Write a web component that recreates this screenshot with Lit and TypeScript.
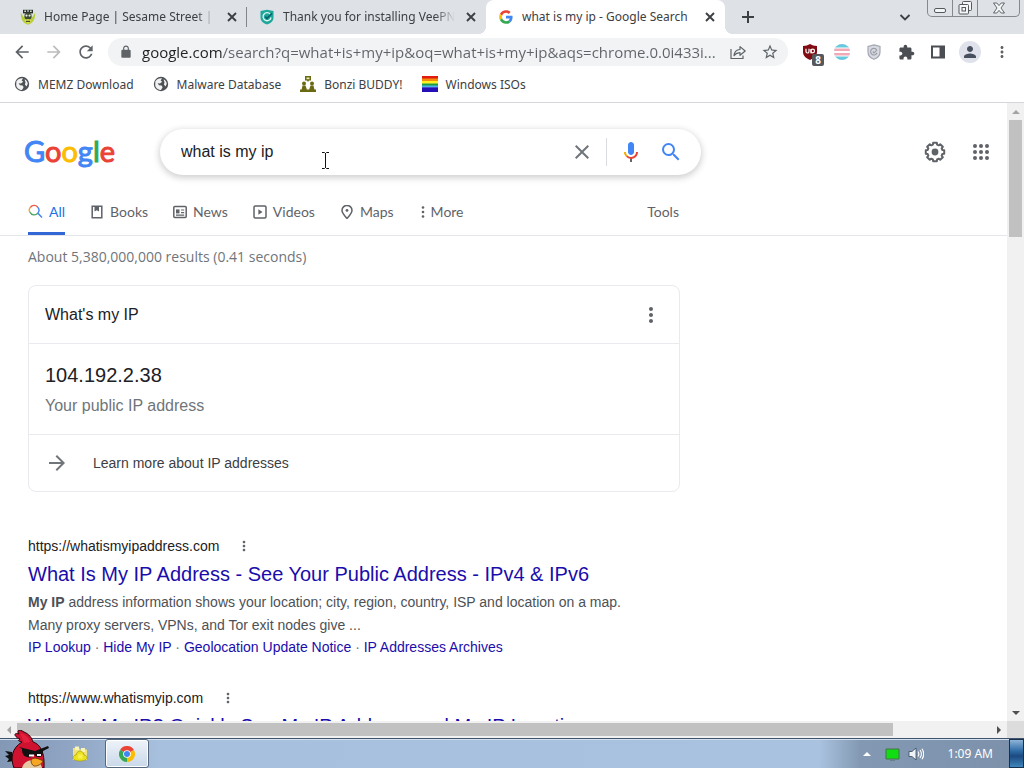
import { LitElement, html, css, svg, TemplateResult } from "lit";
import { customElement, property } from "lit/decorators.js";

/* ---------- icons ---------- */

const icon = (size: number, box: string, body: TemplateResult) =>
  html`<svg width=${size} height=${size} viewBox=${box} aria-hidden="true" style="display:block;flex:none">${body}</svg>`;

const mat = (size: number, d: string, fill = "#5f6368") =>
  icon(size, "0 0 24 24", svg`<path d=${d} fill=${fill}></path>`);

const D = {
  back: "M20 11H7.83l5.59-5.59L12 4l-8 8 8 8 1.41-1.41L7.83 13H20v-2z",
  forward: "M12 4l-1.41 1.41L16.17 11H4v2h12.17l-5.58 5.59L12 20l8-8z",
  reload: "M17.65 6.35C16.2 4.9 14.21 4 12 4c-4.42 0-7.99 3.58-7.99 8s3.57 8 7.99 8c3.73 0 6.84-2.55 7.73-6h-2.08c-.82 2.33-3.04 4-5.65 4-3.31 0-6-2.69-6-6s2.69-6 6-6c1.66 0 3.14.69 4.22 1.78L13 11h7V4l-2.35 2.35z",
  lock: "M18 8h-1V6c0-2.76-2.24-5-5-5S7 3.240 7 6v2H6c-1.100 0-2 .9-2 2v10c0 1.100.9 2 2 2h12c1.100 0 2-.9 2-2V10c0-1.100-.9-2-2-2zM9 8V6c0-1.660 1.340-3 3-3s3 1.340 3 3v2H9z",
  star: "M22 9.24l-7.190-.62L12 2 9.190 8.630 2 9.240l5.460 4.730L5.820 21 12 17.270 18.180 21l-1.630-7.030L22 9.240zM12 15.400l-3.760 2.270 1-4.280-3.320-2.880 4.380-.38L12 6.100l1.710 4.040 4.380.38-3.320 2.880 1 4.280L12 15.400z",
  dots: "M12 8c1.100 0 2-.9 2-2s-.9-2-2-2-2 .9-2 2 .9 2 2 2zm0 2c-1.100 0-2 .9-2 2s.9 2 2 2 2-.9 2-2-.9-2-2-2zm0 6c-1.100 0-2 .9-2 2s.9 2 2 2 2-.9 2-2-.9-2-2-2z",
  puzzle: "M20.500 11H19V7c0-1.100-.9-2-2-2h-4V3.500C13 2.120 11.880 1 10.500 1S8 2.120 8 3.500V5H4c-1.100 0-2 .9-2 2v3.800h1.500c1.490 0 2.700 1.210 2.700 2.700s-1.210 2.700-2.700 2.700H2V20c0 1.100.9 2 2 2h3.800v-1.500c0-1.490 1.210-2.700 2.700-2.700s2.700 1.210 2.700 2.700V22H17c1.100 0 2-.9 2-2v-4h1.500c1.380 0 2.500-1.120 2.500-2.500S21.880 11 20.500 11z",
  person: "M12 12c2.210 0 4-1.790 4-4s-1.790-4-4-4-4 1.790-4 4 1.790 4 4 4zm0 2c-2.670 0-8 1.340-8 4v2h16v-2c0-2.660-5.330-4-8-4z",
  close: "M19 6.410L17.590 5 12 10.590 6.410 5 5 6.410 10.590 12 5 17.590 6.410 19 12 13.410 17.590 19 19 17.590 13.410 12z",
  search: "M15.500 14h-.79l-.28-.27A6.470 6.470 0 0 0 16 9.500 6.500 6.500 0 1 0 9.500 16c1.610 0 3.090-.59 4.230-1.570l.27.28v.79l5 4.990L20.490 19l-4.990-5zm-6 0C7.010 14 5 11.990 5 9.500S7.010 5 9.500 5 14 7.010 14 9.500 11.990 14 9.500 14z",
};

/* Gear outline generated from its tooth geometry, eight rounded teeth around a solid hub. */
const gearPath = (() => {
  const pts: string[] = [];
  for (let i = 0; i < 8; i++) {
    const base = (i * Math.PI) / 4 - Math.PI / 2;
    for (const [off, r] of [[-0.28, 7.6], [-0.2, 9.4], [0.2, 9.4], [0.28, 7.6]]) {
      pts.push(`${(12 + r * Math.cos(base + off)).toFixed(2)} ${(12 + r * Math.sin(base + off)).toFixed(2)}`);
    }
  }
  return `M${pts.join("L")}z`;
})();
const gear = icon(24, "0 0 24 24", svg`
  <path d=${gearPath} fill="none" stroke="#5f6368" stroke-width="2" stroke-linejoin="round"></path>
  <circle cx="12" cy="12" r="3.400" fill="#5f6368"></circle>`);

const globe = icon(16, "0 0 16 16", svg`
  <circle cx="8" cy="8" r="7.200" fill="#4d5156"></circle>
  <path d="M2.400 5.200C4 3 6.500 2 9 2.400L7.600 4.600 9.200 5.800 7 7.400 4.600 7.200 6 9.200l2.600.2 1 1.800L8 14C4.800 14 2.400 11.600 2.200 9z" fill="#fff" opacity=".92"></path>
  <path d="M10.500 3.200c1.800.8 3.200 2.600 3.300 4.600l-1.300 2.600-1.600-1.800.600-2.200z" fill="#fff" opacity=".92"></path>`);

const cookieFace = icon(16, "0 0 16 16", svg`
  <path d="M.8 3.500C.5 9 2.500 14.500 8 15.700 13.500 14.500 15.500 9 15.200 3.500L12.500 8h-9z" fill="#b4cf3a"></path>
  <path d="M3 .8h10v3.600H3z" fill="#27302a"></path>
  <path d="M4.300 1.500h1.700v1.500H4.300zM7.200 1.300h1.600v1.500H7.200zM10 1.500h1.700v1.500H10z" fill="#d8dccf"></path>
  <circle cx="8" cy="7.200" r="3.600" fill="#3b4a30"></circle>
  <circle cx="6.500" cy="6.600" r="1.100" fill="#e9edda"></circle><circle cx="9.600" cy="6.600" r="1.100" fill="#e9edda"></circle>
  <path d="M4.500 11.300 8 10l3.500 1.300L8 15z" fill="#e2dd54"></path><path d="M6 11.800h4V13H6z" fill="#3b4a30"></path>`);

const veepn = icon(16, "0 0 16 16", svg`
  <path d="M1.500 2 8 .8 14.500 2v6.500c0 3.500-3 6-6.500 7-3.500-1-6.500-3.500-6.500-7z" fill="#1fa79a"></path>
  <path d="M11.200 5.200A4 4 0 1 0 12 8.500" stroke="#dff6f1" stroke-width="1.300" fill="none"></path>
  <path d="M6.200 7.600 8 9.400l5-5" stroke="#0b6470" stroke-width="1.600" fill="none"></path>`);

const gMark = icon(16, "-4 -4 56 56", svg`
  <path fill="#EA4335" d="M24 9.500c3.540 0 6.710 1.220 9.210 3.600l6.850-6.850C35.900 2.380 30.470 0 24 0 14.620 0 6.510 5.380 2.560 13.220l7.980 6.190C12.430 13.720 17.740 9.500 24 9.500z"></path>
  <path fill="#4285F4" d="M46.980 24.550c0-1.570-.15-3.090-.38-4.550H24v9.020h12.940c-.58 2.960-2.260 5.480-4.780 7.180l7.730 6c4.510-4.180 7.090-10.360 7.090-17.650z"></path>
  <path fill="#FBBC05" d="M10.530 28.590c-.48-1.450-.76-2.990-.76-4.590s.27-3.140.76-4.590l-7.980-6.190C.92 16.460 0 20.120 0 24c0 3.880.92 7.540 2.560 10.780l7.970-6.190z"></path>
  <path fill="#34A853" d="M24 48c6.480 0 11.930-2.130 15.890-5.810l-7.730-6c-2.150 1.450-4.920 2.300-8.160 2.300-6.260 0-11.570-4.220-13.470-9.910l-7.980 6.190C6.510 42.620 14.620 48 24 48z"></path>`);

const bonzi = icon(16, "0 0 16 16", svg`
  <g fill="#6b6a12"><path d="M5 0h6v4.600H9L8 6 7 4.600H5z"></path>
  <circle cx="4" cy="7.400" r="2"></circle><circle cx="12" cy="7.400" r="2"></circle>
  <path d="M1.500 14 2.500 9.500h3L7 14zM9 14l1.500-4.500h3l1 4.500zM0 13.500h16V16H0z"></path></g>
  <path d="M6.500 1.500h3v1.700h-3z" fill="#e8f0c0"></path>`);

const rainbow = icon(16, "0 0 16 16", svg`
  <path fill="#e01b10" d="M0 0h16v3H0z"></path><path fill="#f58a0c" d="M0 2.500h16v2.800H0z"></path>
  <path fill="#fdf01d" d="M0 5h16v2.800H0z"></path><path fill="#1f9a3c" d="M0 7.500h16v2.500H0z"></path>
  <path fill="#49b4ee" d="M0 9.500h16v2H0z"></path><path fill="#2510b8" d="M0 11.300h16V16H0z"></path>`);

const share = icon(16, "0 0 16 16", svg`
  <path d="M1 5V14.500H13V11.500" fill="none" stroke="#5f6368" stroke-width="1.200"></path>
  <path d="M4 11.500c.4-3.600 2.500-5.800 6-6V2.600L15.200 7 10 11.300V8.700C7.500 8.700 5.600 9.600 4 11.500z" fill="none" stroke="#5f6368" stroke-width="1.200" stroke-linejoin="round"></path>`);

const ublock = html`<span class="ub">${icon(16, "0 0 16 16", svg`
  <path d="M8 0c2 1.300 4.200 2 7 2v6c0 3.800-3 6.300-7 8-4-1.700-7-4.200-7-8V2c2.800 0 5-.7 7-2z" fill="#800b12"></path>
  <path d="M4 4.800v2.700a1.500 1.500 0 0 0 3 0V4.800M9 9.500V5" stroke="#fff" stroke-width="1.200" fill="none"></path>
  <circle cx="10.700" cy="7" r="1.800" stroke="#fff" stroke-width="1.200" fill="none"></circle>`)}<b class="ub-n">8</b></span>`;

const transFlag = icon(16, "0 0 16 16", svg`
  <clipPath id="disc"><circle cx="8" cy="8" r="8"></circle></clipPath>
  <g clip-path="url(#disc)"><path fill="#68c8dc" d="M0 0h16v16H0z"></path><path fill="#fff" d="M0 3.500h16v9H0z"></path><path fill="#f3a9b5" d="M0 4.500h16v2.500H0zM0 9h16v2.500H0z"></path></g>`);

const grayShield = icon(16, "0 0 16 16", svg`
  <path d="M8 .8 14 2.500v5.500c0 3.500-2.500 6-6 7.300C4.500 14 2 11.500 2 8V2.500z" fill="#d8dae0" stroke="#a3a7b3" stroke-width="1.200"></path>
  <path d="M10.600 5.800a3.300 3.300 0 1 0 .4 3M6.800 7.500 8 8.800l3-3" stroke="#9a9eab" stroke-width="1.200" fill="none"></path>`);

const sidePanel = icon(16, "0 0 16 16", svg`
  <path d="M2 2.500h12v11H2z" fill="none" stroke="#4b4f54" stroke-width="2"></path><path d="M9.500 2.500H14v11H9.500z" fill="#4b4f54"></path>`);

const mic = icon(24, "0 0 24 24", svg`
  <path fill="#4285f4" d="M12 15c1.660 0 3-1.310 3-2.970V5.020C15 3.340 13.660 2 12 2S9 3.340 9 5.020v7.010C9 13.690 10.340 15 12 15z"></path>
  <path fill="#666" d="M11 18.080h2V22h-2z"></path>
  <path fill="#f6ad01" d="M7.050 16.870C5.780 15.590 5 13.890 5 12h2c0 1.370.56 2.600 1.460 3.470z"></path>
  <path fill="#ea4335" d="M12 16.930a4.970 5.250 0 0 1-3.540-1.550l-1.410 1.490A6.860 6.860 0 0 0 12 18.940c3.870 0 7-2.990 7-6.940h-2c0 2.920-2.240 4.930-5 4.930z"></path>`);

const gridDots = icon(24, "0 0 24 24", svg`${[6, 12, 18].map((x) => [6, 12, 18].map((y) => svg`<circle cx=${x} cy=${y} r="2" fill="#5f6368"></circle>`))}`);

const colorSearch = icon(15, "0 0 15 15", svg`
  <path d="M2 8.500A4.600 4.600 0 0 1 2.600 3" stroke="#f0a830" stroke-width="1.400" fill="none"></path>
  <path d="M2.400 3.300A4.600 4.600 0 0 1 9.600 3" stroke="#ea5b4c" stroke-width="1.400" fill="none"></path>
  <path d="M9.500 2.900a4.600 4.600 0 0 1 .3 6.200L14 13.500" stroke="#4285f4" stroke-width="1.400" fill="none"></path>
  <path d="M9.800 9.100A4.600 4.600 0 0 1 2 8.300" stroke="#47a35d" stroke-width="1.400" fill="none"></path>`);

const stroke14 = (body: TemplateResult) =>
  icon(14, "0 0 14 14", svg`<g fill="none" stroke="#5f6368" stroke-width="1.500">${body}</g>`);
const books = stroke14(svg`<path d="M2.200 1.200h9.600v11.600H2.200z"></path><path d="M4.500 1h4.500v5.500l-2.200-1.300-2.300 1.300z" fill="#5f6368" stroke="none"></path>`);
const news = stroke14(svg`<rect x=".8" y="1.500" width="12.400" height="11" rx="1"></rect><path d="M3 4.400h3.500v4H3z" fill="#5f6368" stroke="none"></path><path d="M8 5h3.200M8 7.600h3.200M3 10.200h8.200" stroke-width="1.200"></path>`);
const videos = stroke14(svg`<rect x="1" y="1" width="12" height="12" rx="1.200"></rect><path d="M5.400 4.300v5.400L9.500 7z" fill="#5f6368" stroke="none"></path>`);
const maps = stroke14(svg`<path d="M7 13.500C4 10 2 7.800 2 5.400a5 5 0 0 1 10 0C12 7.800 10 10 7 13.500z"></path><circle cx="7" cy="5.400" r="1.400" fill="#5f6368" stroke="none"></circle>`);
const moreDots = html`<svg width="6" height="14" viewBox="0 0 6 14" aria-hidden="true"><g fill="#5f6368"><circle cx="4" cy="2.500" r="1.300"></circle><circle cx="4" cy="7" r="1.300"></circle><circle cx="4" cy="11.500" r="1.300"></circle></g></svg>`;

const bird = html`<svg class="bird" width="48" height="38" viewBox="0 0 48 38" aria-hidden="true">
  <path d="M8 22 1 21l4 4-4 1 4 3-2 3 7-1z" fill="#111"></path>
  <path d="M16 9C10 7 9 2 15 4 12 0 16-1 20 2c5 2 8 6 9 10 7 2 12 10 11 26H10C6 28 8 18 18 12c-3-1-5-1-2-3z" fill="#cf1230" stroke="#2a0509" stroke-width="1"></path>
  <path d="M16 3c5 1 9 5 10 9l-6 1z" fill="#e4213d"></path>
  <path d="M18 38c1-5 6-8 11-8s8 3 9 8z" fill="#e5c9a5"></path>
  <path d="M15 17 31 21 44 16l1 2-6 3c0 4-1 6-5 6-2 0-3-1-4-3-1 3-4 4-7 3-4-1-5-4-5-8z" fill="#111"></path>
  <path d="M25 24.500h5v2h-5zM33 24h4v2h-4z" fill="#fff"></path>
  <path d="M27 30c2-2.500 6-2.500 12 1-1 3-6 5.500-9 5-2-1-3-3-3-6z" fill="#f5a623" stroke="#6b3b00" stroke-width=".8"></path></svg>`;

const folder = icon(18, "0 0 18 18", svg`
  <path d="M2 3h6l1 1.500h7V15H2z" fill="#efe27a"></path><path d="M4 1.500h4V5H4zM10 3h4v4h-4z" fill="#f8f3b6"></path>
  <path d="M5 10c1-3 2.500-4 4-4s3.500 1 4 4c1 0 3 1 3 2.500S14 16 9 16s-7-2-7-3.500S4 10 5 10z" fill="#ece21c" stroke="#a59a12" stroke-width=".7"></path>
  <path d="M7 9.500h4.500v4H7z" fill="#f7f04e"></path>`);

const chrome = icon(16, "0 0 48 48", svg`
  <path fill="#EA4335" d="M24 24 3.200 12A24 24 0 0 1 44.800 12z"></path>
  <path fill="#34A853" d="M24 24 24 48A24 24 0 0 1 3.200 12z"></path>
  <path fill="#FBBC05" d="M24 24 44.800 12A24 24 0 0 1 24 48z"></path>
  <circle cx="24" cy="24" r="11.500" fill="#fff"></circle><circle cx="24" cy="24" r="9" fill="#4285F4"></circle>`);

const speaker = icon(16, "0 0 16 16", svg`
  <path d="M1 5.500h3L8 2v12l-4-3.500H1z" fill="#eef3f8" stroke="#3b4a5c" stroke-width=".8"></path>
  <path d="M10 5.500c1 1.500 1 3.500 0 5M12 4c1.700 2.400 1.700 5.600 0 8M14 2.800c2 3 2 7.400 0 10.400" fill="none" stroke="#fff" stroke-width="1.100"></path>`);

const flagMonitor = icon(16, "0 0 16 16", svg`<path d="M2 3h13v10H2z" fill="#10dd12" stroke="#49704a"></path><path d="M6 13.500h5V15H6z" fill="#6c7f8c"></path>`);

const arrow = (dir: "up" | "down" | "left" | "right", fill: string) => {
  const d = { up: "M0 6 4 2l4 4z", down: "M0 2l4 4 4-4z", left: "M6 0 2 4l4 4z", right: "M2 0l4 4-4 4z" }[dir];
  return icon(8, "0 0 8 8", svg`<path d=${d} fill=${fill}></path>`);
};

/* ---------- shared control reset ---------- */

const reset = css`
  *, *::before, *::after { box-sizing: border-box; }
  button { border: 0; padding: 0; margin: 0; background: none; font: inherit; color: inherit; display: flex; align-items: center; justify-content: center; flex: none; }
  input { border: 0; padding: 0; margin: 0; outline: 0; background: none; font: inherit; color: inherit; min-width: 0; }
  a { color: inherit; text-decoration: none; }
`;

/* ---------- browser tab ---------- */

@customElement("browser-tab")
class BrowserTab extends LitElement {
  @property() label = "";
  @property({ type: Boolean, reflect: true }) active = false;
  @property({ attribute: false }) favicon?: TemplateResult;

  static styles = [reset, css`
    :host { flex: 0 1 239px; min-width: 0; display: flex; align-items: center; gap: 8px; padding: 0 7px 0 12px; position: relative; color: #3c4043; }
    :host([active]) { background: #fff; border-radius: 8px 8px 0 0; }
    :host([active])::before, :host([active])::after { content: ""; position: absolute; bottom: 0; width: 8px; height: 8px; }
    :host([active])::before { left: -8px; background: radial-gradient(circle at 0 0, transparent 8px, #fff 8px); }
    :host([active])::after { right: -8px; background: radial-gradient(circle at 100% 0, transparent 8px, #fff 8px); }
    .title { flex: 1; min-width: 0; overflow: hidden; white-space: nowrap; line-height: 20px; mask-image: linear-gradient(90deg, #000 calc(100% - 20px), transparent); }
    :host([active]) .title { mask-image: none; }
    button { width: 16px; height: 16px; }
  `];

  render() {
    return html`${this.favicon}<span class="title">${this.label}</span>
      <button aria-label="Close tab">${icon(10, "0 0 10 10", svg`<path d="M1 1l8 8M9 1 1 9" stroke="#3c4043" stroke-width="1.900"></path>`)}</button>`;
  }
}

/* ---------- search result ---------- */

@customElement("search-result")
class SearchResult extends LitElement {
  @property() url = "";
  @property() heading = "";
  @property({ attribute: false }) links: string[] = [];

  static styles = [reset, css`
    :host { display: block; margin-bottom: 29px; color: #4d5156; font-size: 14px; }
    .src { display: flex; align-items: center; gap: 17px; height: 24px; color: #202124; }
    h3 { margin: 0; font-size: 20px; font-weight: 400; line-height: 33px; color: #1a0dab; white-space: nowrap; }
    .text { line-height: 23px; }
    .links { line-height: 20px; color: #70757a; }
    .links a { color: #1a0dab; }
  `];

  render() {
    return html`
      <div class="src"><a href="#">${this.url}</a><button aria-label="About this result">${mat(16, D.dots)}</button></div>
      <h3><a href="#">${this.heading}</a></h3>
      <div class="text"><slot></slot></div>
      <div class="links">${this.links.map((l, i) => html`${i ? " · " : ""}<a href="#">${l}</a>`)}</div>`;
  }
}

/* ---------- whole desktop ---------- */

@customElement("app-root")
class AppRoot extends LitElement {
  static styles = [reset, css`
    :host { display: flex; flex-direction: column; height: 100vh; overflow: hidden; position: relative; background: #fff; font: 12px "Noto Sans", "Open Sans", sans-serif; color: #3c4043; }

    .strip { flex: none; height: 34px; padding-left: 8px; background: #dee1e6; display: flex; }
    .sep { width: 1px; height: 20px; background: #80868b; align-self: center; margin-left: -1px; }
    .plus { width: 28px; margin-left: 9px; }
    .chevron { width: 28px; margin-left: auto; }
    .win { display: flex; height: 17px; margin: 0 4px 0 8px; border: 1px solid #85898e; border-top: 0; border-radius: 0 0 5px 5px; }
    .win button { width: 25px; border-right: 1px solid #85898e; }
    .win button:last-child { width: 41px; border-right: 0; }

    .bar { flex: none; height: 36px; padding: 0 6px; display: flex; align-items: center; }
    .bar > button { width: 32px; height: 32px; }
    .omni { flex: 1; min-width: 0; height: 28px; margin: 0 6px; padding: 0 2px 0 11px; border-radius: 14px; background: #f1f3f4; display: flex; align-items: center; }
    .omni input { flex: 1; margin-left: 9px; height: 28px; font-family: "Open Sans", sans-serif; font-size: 15px; color: transparent; background: linear-gradient(90deg, #202124 80px, #5f6368 80px); -webkit-background-clip: text; background-clip: text; }
    .omni button { width: 32px; }
    .ub { position: relative; display: block; }
    .ub-n { position: absolute; left: 10px; top: 10px; width: 12px; height: 12px; border-radius: 2px; background: #55585c; color: #fff; font-size: 10px; line-height: 12px; text-align: center; }
    .avatar { width: 22px; height: 22px; border-radius: 50%; background: #dfe2ea; display: flex; align-items: center; justify-content: center; }

    .marks { flex: none; height: 33px; padding: 0 14px 4px; display: flex; align-items: center; gap: 19px; border-bottom: 1px solid #d4d6d9; }
    .marks a { display: flex; align-items: center; gap: 8px; }

    .frame { flex: 1; min-height: 0; display: grid; grid-template: minmax(0, 1fr) 17px / minmax(0, 1fr) 17px; }
    .page { overflow: hidden; font-family: "Liberation Sans", Arial, sans-serif; }
    .vbar, .hbar { background: #f1f1f1; display: flex; align-items: center; justify-content: space-between; }
    .vbar { flex-direction: column; }
    .end { flex: none; width: 17px; height: 17px; display: flex; align-items: center; justify-content: center; }
    .track { flex: 1; align-self: stretch; }
    .thumb { background: #c1c1c1; }
    .vbar .thumb { height: 20%; margin: 0 2px; }
    .hbar .thumb { width: 90%; height: 13px; margin-top: 2px; }
    .corner { background: #dcdcdc; }

    .head { display: flex; align-items: center; padding: 26px 14px 0 24px; }
    .logo { width: 136px; padding-bottom: 2px; font: 29px/44px Lato, sans-serif; }
    .logo span { -webkit-text-stroke: 1px currentColor; }
    .cb { color: #4285f4; } .cr { color: #ea4335; } .cy { color: #fbbc05; } .cg { color: #34a853; }
    .box { position: relative; flex: 0 1 541px; height: 46px; padding: 0 18px 0 21px; border-radius: 23px; box-shadow: 0 2px 6px 1px rgba(64, 60, 67, .24); display: flex; align-items: center; }
    .box input { flex: 1; font-size: 16px; height: 44px; color: #202124; }
    .rule { width: 1px; height: 28px; margin: 0 12px; background: #dadce0; }
    .mic { margin-right: 16px; }
    .caret { position: absolute; left: 161px; top: 23px; }
    .tools { margin-left: auto; display: flex; gap: 22px; }

    .nav { padding-left: 28px; border-bottom: 1px solid #e4e6e9; font: 14px Lato, sans-serif; color: #5f6368; }
    .row { width: 651px; max-width: 100%; padding-top: 14px; display: flex; gap: 25px; }
    .row > * { display: flex; align-items: center; gap: 6px; height: 46px; padding-bottom: 1px; }
    .row .on { color: #1a73e8; border-bottom: 3px solid #3367d6; padding: 2px 0 0; }
    .row .last { margin-left: auto; }

    .body { padding: 0 28px; }
    .stats { font: 14px/42px "Open Sans", sans-serif; color: #70757a; }
    .card { max-width: 652px; margin: 7px 0 42px; border: 1px solid #e8eaed; border-radius: 8px; color: #202124; }
    .card > * { padding: 0 16px; }
    .card > * + * { border-top: 1px solid #e8eaed; }
    .c1 { height: 57px; display: flex; align-items: center; justify-content: space-between; font-size: 16px; }
    .card .c2 { height: 91px; padding-top: 15px; font-size: 16px; line-height: 30px; color: #70757a; }
    .ip { font-size: 20px; line-height: 32px; color: #202124; }
    .c3 { height: 57px; display: flex; align-items: center; gap: 24px; font-size: 14px; color: #3c4043; }

    .task { flex: none; position: relative; height: 30px; border-top: 1px solid #3f526e; box-shadow: inset 0 1px #d5e2f0; display: flex; align-items: center; background: linear-gradient(90deg, #8398b5 0, #8fa5c3 70px, #a7c0dd 160px, #a9c2df 80%, #8399b3 84%, #7c90aa 100%); }
    .start { width: 55px; height: 29px; }
    .bird { position: absolute; left: 4px; bottom: 0; }
    .pin { width: 50px; height: 29px; }
    .run { width: 44px; height: 29px; border: 1px solid #54677f; border-radius: 3px; background: linear-gradient(#eef3f9, #c9d8e9); box-shadow: inset 0 0 0 1px #fff; }
    .tray { margin-left: auto; display: flex; align-items: center; gap: 8px; color: #fff; }
    .tray .hidden { width: 18px; height: 20px; }
    .tray time { margin: 0 8px 0 16px; line-height: 20px; }
    .desk { width: 15px; height: 29px; border: 1px solid #16304e; background: linear-gradient(#8db4d8, #2f6ca6 40%, #1c4a80 60%, #3f86bd); }
  `];

  render() {
    return html`
      <header class="strip">
        <browser-tab label="Home Page | Sesame Street | P" .favicon=${cookieFace}></browser-tab>
        <span class="sep"></span>
        <browser-tab label="Thank you for installing VeePN" .favicon=${veepn}></browser-tab>
        <browser-tab active label="what is my ip - Google Search" .favicon=${gMark}></browser-tab>
        <button class="plus" aria-label="New tab">${icon(14, "0 0 14 14", svg`<path d="M7 1v12M1 7h12" stroke="#3c4043" stroke-width="2"></path>`)}</button>
        <button class="chevron" aria-label="Search tabs">${icon(12, "0 0 12 12", svg`<path d="M1.500 4 6 8.500 10.500 4" stroke="#3c4043" stroke-width="1.800" fill="none"></path>`)}</button>
        <div class="win">
          <button aria-label="Minimize">${icon(14, "0 0 14 14", svg`<rect x="1.500" y="7.500" width="11" height="4" rx="1.500" fill="#f4f5f6" stroke="#55585c"></rect>`)}</button>
          <button aria-label="Restore">${icon(14, "0 0 14 14", svg`<g fill="#f4f5f6" stroke="#55585c"><rect x="4.500" y=".5" width="9" height="9" rx="1"></rect><rect x="1" y="3.500" width="9.500" height="9.500" rx="1"></rect><rect x="4" y="6.500" width="3.500" height="3.500"></rect></g>`)}</button>
          <button aria-label="Close">${icon(14, "0 0 14 14", svg`<path d="M1.500 2h3.300L7 4.600 9.200 2h3.300L9 7l3.500 5H9.200L7 9.400 4.800 12H1.500L5 7z" fill="#f4f5f6" stroke="#55585c" stroke-width=".9"></path>`)}</button>
        </div>
      </header>

      <div class="bar">
        <button aria-label="Back">${mat(20, D.back)}</button>
        <button aria-label="Forward">${mat(20, D.forward, "#babcbe")}</button>
        <button aria-label="Reload">${mat(20, D.reload)}</button>
        <div class="omni">
          ${mat(14, D.lock)}
          <input aria-label="Address" value="google.com/search?q=what+is+my+ip&oq=what+is+my+ip&aqs=chrome.0.0i433i..." />
          <button aria-label="Share">${share}</button>
          <button aria-label="Bookmark">${mat(18, D.star)}</button>
        </div>
        <button aria-label="uBlock Origin">${ublock}</button>
        <button aria-label="Flag extension">${transFlag}</button>
        <button aria-label="VPN extension">${grayShield}</button>
        <button aria-label="Extensions">${mat(17, D.puzzle, "#4b4f54")}</button>
        <button aria-label="Side panel">${sidePanel}</button>
        <button aria-label="Profile"><span class="avatar">${mat(18, D.person, "#48505f")}</span></button>
        <button aria-label="Menu">${mat(18, D.dots)}</button>
      </div>

      <nav class="marks">
        <a href="#">${globe}MEMZ Download</a>
        <a href="#">${globe}Malware Database</a>
        <a href="#">${bonzi}Bonzi BUDDY!</a>
        <a href="#">${rainbow}Windows ISOs</a>
      </nav>

      <div class="frame">
        <main class="page">
          <div class="head">
            <a class="logo" href="#" aria-label="Google"><span class="cb">G</span><span class="cr">o</span><span class="cy">o</span><span class="cb">g</span><span class="cg">l</span><span class="cr">e</span></a>
            <form class="box">
              <input aria-label="Search" value="what is my ip" />
              <button type="button" aria-label="Clear">${mat(24, D.close, "#70757a")}</button>
              <span class="rule"></span>
              <button type="button" class="mic" aria-label="Search by voice">${mic}</button>
              <button type="button" aria-label="Google Search">${mat(24, D.search, "#4285f4")}</button>
              <svg class="caret" width="9" height="17" viewBox="0 0 9 17" aria-hidden="true"><path d="M1 .5h2.500l1 1 1-1H8M4.500 1v15M1 16.500h2.500l1-1 1 1H8" fill="none" stroke="#111"></path></svg>
            </form>
            <div class="tools">
              <button aria-label="Settings">${gear}</button>
              <button aria-label="Google apps">${gridDots}</button>
            </div>
          </div>
          <nav class="nav"><div class="row">
            <a class="on" href="#">${colorSearch}All</a>
            <a href="#">${books}Books</a>
            <a href="#">${news}News</a>
            <a href="#">${videos}Videos</a>
            <a href="#">${maps}Maps</a>
            <a href="#">${moreDots}More</a>
            <button class="last">Tools</button>
          </div></nav>
          <div class="body">
            <div class="stats">About 5,380,000,000 results (0.41 seconds)</div>
            <section class="card">
              <div class="c1">What's my IP<button aria-label="More options">${mat(24, D.dots)}</button></div>
              <div class="c2"><div class="ip">104.192.2.38</div>Your public IP address</div>
              <a class="c3" href="#">${mat(24, D.forward, "#70757a")}Learn more about IP addresses</a>
            </section>
            <search-result url="https://whatismyipaddress.com"
              heading="What Is My IP Address - See Your Public Address - IPv4 &amp; IPv6"
              .links=${["IP Lookup", "Hide My IP", "Geolocation Update Notice", "IP Addresses Archives"]}>
              <b>My IP</b> address information shows your location; city, region, country, ISP and location on a map.<br />Many proxy servers, VPNs, and Tor exit nodes give ...
            </search-result>
            <search-result url="https://www.whatismyip.com"
              heading="What Is My IP? Quickly See My IP Address and My IP Location"></search-result>
          </div>
        </main>
        <div class="vbar"><span class="end">${arrow("up", "#a3a3a3")}</span><div class="track"><div class="thumb"></div></div><span class="end">${arrow("down", "#505050")}</span></div>
        <div class="hbar"><span class="end">${arrow("left", "#a3a3a3")}</span><div class="track"><div class="thumb"></div></div><span class="end">${arrow("right", "#505050")}</span></div>
        <div class="corner"></div>
      </div>

      <footer class="task">
        <button class="start" aria-label="Start">${bird}</button>
        <button class="pin" aria-label="Folder">${folder}</button>
        <button class="run" aria-label="Google Chrome">${chrome}</button>
        <div class="tray">
          <button class="hidden" aria-label="Show hidden icons">${arrow("up", "#fff")}</button>
          ${flagMonitor}${speaker}
          <time>1:09 AM</time>
          <button class="desk" aria-label="Show desktop"></button>
        </div>
      </footer>`;
  }
}
